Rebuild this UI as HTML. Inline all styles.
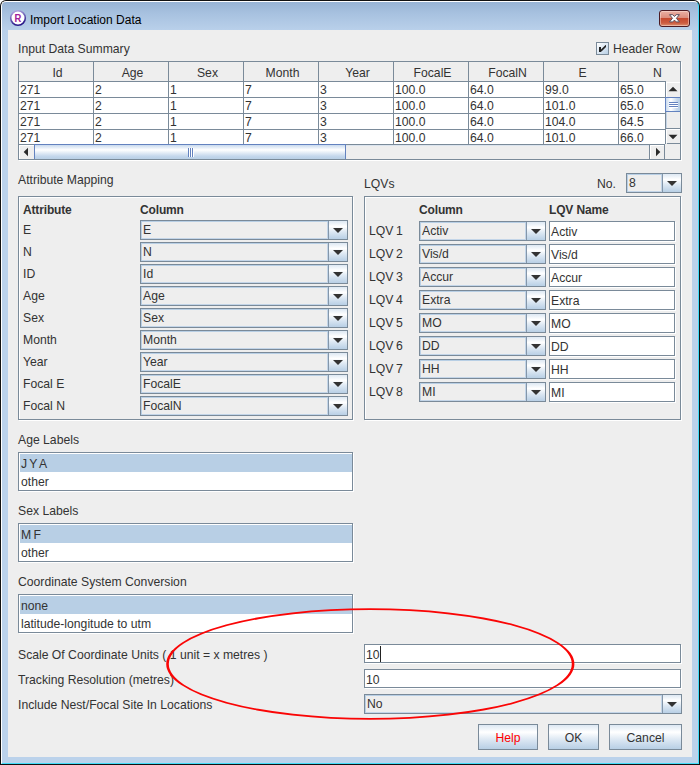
<!DOCTYPE html><html><head><meta charset="utf-8"><title>Import Location Data</title><style>
html,body{margin:0;padding:0;}
body{width:700px;height:765px;overflow:hidden;position:relative;background:#fff;font-family:"Liberation Sans",Arial,sans-serif;font-size:12.2px;color:#333;}
.abs{position:absolute;}
#frame{position:absolute;left:0;top:0;width:700px;height:765px;background:#111;border-radius:6px 6px 0 0;}
#frame2{position:absolute;left:1px;top:1px;width:698px;height:763px;box-sizing:border-box;border-radius:5px 5px 0 0;border:1px solid #fff;border-right-color:#42dcf8;border-bottom-color:#42dcf8;background:linear-gradient(#98b4d5 0px,#a8c2e0 12px,#b9d0ea 28px,#bbd2eb 40px,#bbd2eb 100%);}
#content{position:absolute;left:8px;top:30px;width:684px;height:727px;background:#eeeeee;}
.t{position:absolute;white-space:nowrap;line-height:14px;height:14px;}
.b{font-weight:bold;font-size:12px;letter-spacing:-0.15px;}
.title{position:absolute;left:30px;top:13px;font-size:12px;line-height:15px;color:#000;white-space:nowrap;}
.close{position:absolute;left:659px;top:10px;width:31px;height:17px;border:1px solid #4c1a22;border-radius:3px;box-sizing:border-box;background:linear-gradient(#eab0a4 0%,#dc8c7c 47%,#c64a30 50%,#cc5c40 80%,#de9070 100%);box-shadow:inset 0 0 0 1px rgba(255,235,230,.45);}
.etched{position:absolute;box-sizing:border-box;border:1px solid #7a8a99;}
.etchedw{position:absolute;box-sizing:border-box;border:1px solid #fff;}
.combo{position:absolute;box-sizing:border-box;height:20px;border:1px solid #7a8a99;background:#eee;}
.combo .txa{position:absolute;left:0;top:0;right:19px;bottom:0;box-shadow:inset 1px 1px 0 #b8cfe5, inset -1px -1px 0 #c3d5e8;}
.combo .tx{position:absolute;left:2px;top:2px;line-height:14px;white-space:nowrap;}
.combo .ar{position:absolute;right:0;top:0;width:18px;height:18px;border-left:1px solid #8496a9;background:linear-gradient(#dde8f3 0%,#fff 30%,#dde8f3 60%,#b8cfe5 100%);}
.combo .ar:after{content:"";position:absolute;left:4px;top:7px;border-left:5px solid transparent;border-right:5px solid transparent;border-top:5px solid #333;}
.tf{position:absolute;box-sizing:border-box;height:20px;border:1px solid #7a8a99;background:#fff;box-shadow:1px 1px 0 #fff;}
.tf .tx{position:absolute;left:1px;top:3px;line-height:14px;white-space:nowrap;}
.list{position:absolute;box-sizing:border-box;border:1px solid #7a8a99;background:#fff;box-shadow:1px 1px 0 #fff;}
.list .sel{position:absolute;left:1px;right:0;top:1px;height:18px;background:#b8cfe5;}
.list .r{position:absolute;left:2px;line-height:14px;white-space:nowrap;}
.btn{position:absolute;box-sizing:border-box;height:26px;border:1px solid #7a8a99;background:linear-gradient(#dde8f3 0%,#fff 30%,#dde8f3 60%,#b8cfe5 100%);text-align:center;line-height:26px;font-size:12.2px;}
</style></head><body>
<div id="frame"></div><div id="frame2"></div>
<svg class="abs" style="left:9px;top:9px" width="18" height="18" viewBox="0 0 18 18"><defs><linearGradient id="rg" x1="0" y1="0" x2="0.3" y2="1"><stop offset="0" stop-color="#b9b2e6"/><stop offset="1" stop-color="#2a1a8a"/></linearGradient></defs><circle cx="9" cy="9" r="7.3" fill="#fff" stroke="url(#rg)" stroke-width="1.6"/><text x="9" y="13" text-anchor="middle" transform="translate(9 0) scale(0.86 1) translate(-9 0)" font-family="Liberation Sans,sans-serif" font-weight="bold" font-size="11" fill="#a0209a">R</text></svg>
<div class="title">Import Location Data</div>
<div class="close"><svg width="29" height="15" viewBox="0 0 29 15" style="position:absolute;left:0;top:0"><path d="M9.5 3.7 L12.7 3.7 L14.45 5.5 L16.2 3.7 L19.4 3.7 L16.4 7.3 L19.4 10.9 L16.2 10.9 L14.45 9.1 L12.7 10.9 L9.5 10.9 L12.5 7.3 Z" fill="#fff" stroke="#584e5e" stroke-width="1" stroke-linejoin="round"/></svg></div>
<div id="content"></div>
<div class="t " style="left:18px;top:42px;">Input Data Summary</div>
<div class="abs" style="left:596px;top:42px;width:13px;height:13px;box-sizing:border-box;border:1px solid #7a8a99;background:linear-gradient(135deg,#fff 0%,#dde8f3 50%,#b8cfe5 100%);"></div>
<svg class="abs" style="left:596px;top:42px" width="13" height="13" viewBox="0 0 13 13"><rect x="3" y="5" width="2" height="5" fill="#222"/><path d="M5 7.6 L9.6 3 L10 3 L10 5 L5.5 9.5 L5 9.5 Z" fill="#222"/></svg>
<div class="t " style="left:613px;top:42px;">Header Row</div>
<div class="abs" style="left:18px;top:61px;width:663px;height:99px;box-sizing:border-box;border:1px solid #7a8a99;background:#eee;box-shadow:1px 1px 0 #fff;"></div>
<div class="abs" style="left:19px;top:82px;width:646px;height:62px;background:#fff;"></div>
<div class="abs" style="left:19px;top:81px;width:647px;height:1px;background:#7a8a99;"></div>
<div class="t" style="left:20px;top:66px;width:75px;text-align:center;line-height:15px;height:15px;">Id</div>
<div class="abs" style="left:93px;top:62px;width:1px;height:82px;background:#7a8a99;"></div>
<div class="t" style="left:95px;top:66px;width:75px;text-align:center;line-height:15px;height:15px;">Age</div>
<div class="abs" style="left:168px;top:62px;width:1px;height:82px;background:#7a8a99;"></div>
<div class="t" style="left:170px;top:66px;width:75px;text-align:center;line-height:15px;height:15px;">Sex</div>
<div class="abs" style="left:243px;top:62px;width:1px;height:82px;background:#7a8a99;"></div>
<div class="t" style="left:245px;top:66px;width:75px;text-align:center;line-height:15px;height:15px;">Month</div>
<div class="abs" style="left:318px;top:62px;width:1px;height:82px;background:#7a8a99;"></div>
<div class="t" style="left:320px;top:66px;width:75px;text-align:center;line-height:15px;height:15px;">Year</div>
<div class="abs" style="left:393px;top:62px;width:1px;height:82px;background:#7a8a99;"></div>
<div class="t" style="left:395px;top:66px;width:75px;text-align:center;line-height:15px;height:15px;">FocalE</div>
<div class="abs" style="left:468px;top:62px;width:1px;height:82px;background:#7a8a99;"></div>
<div class="t" style="left:470px;top:66px;width:75px;text-align:center;line-height:15px;height:15px;">FocalN</div>
<div class="abs" style="left:543px;top:62px;width:1px;height:82px;background:#7a8a99;"></div>
<div class="t" style="left:545px;top:66px;width:75px;text-align:center;line-height:15px;height:15px;">E</div>
<div class="abs" style="left:618px;top:62px;width:1px;height:82px;background:#7a8a99;"></div>
<div class="t" style="left:620px;top:66px;width:75px;text-align:center;line-height:15px;height:15px;">N</div>
<div class="abs" style="left:19px;top:97px;width:646px;height:1px;background:#7a8a99;"></div>
<div class="t" style="left:20px;top:83px;line-height:15px;height:15px;">271</div>
<div class="t" style="left:95px;top:83px;line-height:15px;height:15px;">2</div>
<div class="t" style="left:170px;top:83px;line-height:15px;height:15px;">1</div>
<div class="t" style="left:245px;top:83px;line-height:15px;height:15px;">7</div>
<div class="t" style="left:320px;top:83px;line-height:15px;height:15px;">3</div>
<div class="t" style="left:395px;top:83px;line-height:15px;height:15px;">100.0</div>
<div class="t" style="left:470px;top:83px;line-height:15px;height:15px;">64.0</div>
<div class="t" style="left:545px;top:83px;line-height:15px;height:15px;">99.0</div>
<div class="t" style="left:620px;top:83px;line-height:15px;height:15px;">65.0</div>
<div class="abs" style="left:19px;top:113px;width:646px;height:1px;background:#7a8a99;"></div>
<div class="t" style="left:20px;top:99px;line-height:15px;height:15px;">271</div>
<div class="t" style="left:95px;top:99px;line-height:15px;height:15px;">2</div>
<div class="t" style="left:170px;top:99px;line-height:15px;height:15px;">1</div>
<div class="t" style="left:245px;top:99px;line-height:15px;height:15px;">7</div>
<div class="t" style="left:320px;top:99px;line-height:15px;height:15px;">3</div>
<div class="t" style="left:395px;top:99px;line-height:15px;height:15px;">100.0</div>
<div class="t" style="left:470px;top:99px;line-height:15px;height:15px;">64.0</div>
<div class="t" style="left:545px;top:99px;line-height:15px;height:15px;">101.0</div>
<div class="t" style="left:620px;top:99px;line-height:15px;height:15px;">65.0</div>
<div class="abs" style="left:19px;top:129px;width:646px;height:1px;background:#7a8a99;"></div>
<div class="t" style="left:20px;top:115px;line-height:15px;height:15px;">271</div>
<div class="t" style="left:95px;top:115px;line-height:15px;height:15px;">2</div>
<div class="t" style="left:170px;top:115px;line-height:15px;height:15px;">1</div>
<div class="t" style="left:245px;top:115px;line-height:15px;height:15px;">7</div>
<div class="t" style="left:320px;top:115px;line-height:15px;height:15px;">3</div>
<div class="t" style="left:395px;top:115px;line-height:15px;height:15px;">100.0</div>
<div class="t" style="left:470px;top:115px;line-height:15px;height:15px;">64.0</div>
<div class="t" style="left:545px;top:115px;line-height:15px;height:15px;">104.0</div>
<div class="t" style="left:620px;top:115px;line-height:15px;height:15px;">64.5</div>
<div class="t" style="left:20px;top:131px;line-height:15px;height:15px;">271</div>
<div class="t" style="left:95px;top:131px;line-height:15px;height:15px;">2</div>
<div class="t" style="left:170px;top:131px;line-height:15px;height:15px;">1</div>
<div class="t" style="left:245px;top:131px;line-height:15px;height:15px;">7</div>
<div class="t" style="left:320px;top:131px;line-height:15px;height:15px;">3</div>
<div class="t" style="left:395px;top:131px;line-height:15px;height:15px;">100.0</div>
<div class="t" style="left:470px;top:131px;line-height:15px;height:15px;">64.0</div>
<div class="t" style="left:545px;top:131px;line-height:15px;height:15px;">101.0</div>
<div class="t" style="left:620px;top:131px;line-height:15px;height:15px;">66.0</div>
<div class="abs" style="left:666px;top:62px;width:14px;height:97px;background:#eee;"></div>
<div class="abs" style="left:665px;top:82px;width:1px;height:62px;background:#7a8a99;"></div>
<div class="abs" style="left:666px;top:82px;width:14px;height:15px;box-shadow:inset 1px 1px 0 #fff;"></div>
<div class="abs" style="left:666px;top:129px;width:14px;height:14px;box-shadow:inset 1px 1px 0 #fff;"></div>
<div class="abs" style="left:666px;top:112px;width:1px;height:16px;background:#c4d4e6;"></div>
<svg class="abs" style="left:666px;top:82px" width="14" height="63" viewBox="0 0 14 63"><path d="M2.5 9.3 L11.5 9.3 L7 4.8 Z" fill="#2a2a2a"/><path d="M2.5 52.7 L11.5 52.7 L7 57.2 Z" fill="#2a2a2a"/></svg>
<div class="abs" style="left:665px;top:97px;width:15px;height:15px;box-sizing:border-box;border:1px solid #6382bf;border-right:0;background:linear-gradient(90deg,#c9daee 0%,#fff 35%,#c4d7ec 80%,#b8cfe5 100%);"></div>
<div class="abs" style="left:669px;top:102px;width:9px;height:1px;background:#6382bf;box-shadow:0 2px 0 #6382bf,0 4px 0 #6382bf,0 1px 0 #fff,0 3px 0 #fff,0 5px 0 #fff;"></div>
<div class="abs" style="left:666px;top:128px;width:14px;height:1px;background:#7a8a99;"></div>
<div class="abs" style="left:667px;top:143px;width:13px;height:1px;background:#7a8a99;"></div>
<div class="abs" style="left:19px;top:145px;width:646px;height:14px;background:#eee;"></div>
<div class="abs" style="left:19px;top:144px;width:646px;height:1px;background:#7a8a99;"></div>
<div class="abs" style="left:19px;top:145px;width:15px;height:14px;box-shadow:inset 1px 1px 0 #fff;"></div>
<div class="abs" style="left:650px;top:145px;width:14px;height:14px;box-shadow:inset 1px 1px 0 #fff;"></div>
<div class="abs" style="left:346px;top:145px;width:303px;height:1px;background:#dbe4ee;"></div>
<div class="abs" style="left:34px;top:144px;width:312px;height:15px;box-sizing:border-box;border:1px solid #6382bf;border-bottom:0;background:linear-gradient(#c9daee 0%,#fff 35%,#c4d7ec 80%,#b8cfe5 100%);"></div>
<div class="abs" style="left:188px;top:148px;width:1px;height:9px;background:#6382bf;box-shadow:2px 0 0 #6382bf,4px 0 0 #6382bf,1px 0 0 #fff,3px 0 0 #fff,5px 0 0 #fff;"></div>
<svg class="abs" style="left:19px;top:145px" width="647" height="15" viewBox="0 0 647 15"><path d="M9 2.7 L9 11.3 L4.7 7 Z" fill="#2a2a2a"/><path d="M637 2.7 L637 11.3 L641.3 7 Z" fill="#2a2a2a"/></svg>
<div class="abs" style="left:649px;top:145px;width:1px;height:14px;background:#7a8a99;"></div>
<div class="abs" style="left:664px;top:145px;width:1px;height:14px;background:#7a8a99;"></div>
<div class="t " style="left:18px;top:173px;">Attribute Mapping</div>
<div class="etchedw" style="left:19px;top:197px;width:335px;height:224px;"></div>
<div class="etched" style="left:18px;top:196px;width:335px;height:224px;"></div>
<div class="t b" style="left:23px;top:203px;">Attribute</div>
<div class="t b" style="left:140px;top:203px;">Column</div>
<div class="t " style="left:23px;top:223px;">E</div>
<div class="combo" style="left:140px;top:220px;width:208px;"><div class="txa"></div><div class="tx">E</div><div class="ar"></div></div>
<div class="t " style="left:23px;top:245px;">N</div>
<div class="combo" style="left:140px;top:242px;width:208px;"><div class="txa"></div><div class="tx">N</div><div class="ar"></div></div>
<div class="t " style="left:23px;top:267px;">ID</div>
<div class="combo" style="left:140px;top:264px;width:208px;"><div class="txa"></div><div class="tx">Id</div><div class="ar"></div></div>
<div class="t " style="left:23px;top:289px;">Age</div>
<div class="combo" style="left:140px;top:286px;width:208px;"><div class="txa"></div><div class="tx">Age</div><div class="ar"></div></div>
<div class="t " style="left:23px;top:311px;">Sex</div>
<div class="combo" style="left:140px;top:308px;width:208px;"><div class="txa"></div><div class="tx">Sex</div><div class="ar"></div></div>
<div class="t " style="left:23px;top:333px;">Month</div>
<div class="combo" style="left:140px;top:330px;width:208px;"><div class="txa"></div><div class="tx">Month</div><div class="ar"></div></div>
<div class="t " style="left:23px;top:355px;">Year</div>
<div class="combo" style="left:140px;top:352px;width:208px;"><div class="txa"></div><div class="tx">Year</div><div class="ar"></div></div>
<div class="t " style="left:23px;top:377px;">Focal E</div>
<div class="combo" style="left:140px;top:374px;width:208px;"><div class="txa"></div><div class="tx">FocalE</div><div class="ar"></div></div>
<div class="t " style="left:23px;top:399px;">Focal N</div>
<div class="combo" style="left:140px;top:396px;width:208px;"><div class="txa"></div><div class="tx">FocalN</div><div class="ar"></div></div>
<div class="t " style="left:364px;top:177px;">LQVs</div>
<div class="t " style="left:597px;top:177px;">No.</div>
<div class="combo" style="left:626px;top:173px;width:56px;"><div class="txa"></div><div class="tx">8</div><div class="ar"></div></div>
<div class="etchedw" style="left:365px;top:197px;width:317px;height:224px;"></div>
<div class="etched" style="left:364px;top:196px;width:317px;height:224px;"></div>
<div class="t b" style="left:419px;top:203px;">Column</div>
<div class="t b" style="left:549px;top:203px;">LQV Name</div>
<div class="t " style="left:369px;top:224px;word-spacing:-0.7px;">LQV 1</div>
<div class="combo" style="left:419px;top:221px;width:127px;"><div class="txa"></div><div class="tx">Activ</div><div class="ar"></div></div>
<div class="tf" style="left:549px;top:221px;width:126px;"><div class="tx">Activ</div></div>
<div class="t " style="left:369px;top:247px;word-spacing:-0.7px;">LQV 2</div>
<div class="combo" style="left:419px;top:244px;width:127px;"><div class="txa"></div><div class="tx">Vis/d</div><div class="ar"></div></div>
<div class="tf" style="left:549px;top:244px;width:126px;"><div class="tx">Vis/d</div></div>
<div class="t " style="left:369px;top:270px;word-spacing:-0.7px;">LQV 3</div>
<div class="combo" style="left:419px;top:267px;width:127px;"><div class="txa"></div><div class="tx">Accur</div><div class="ar"></div></div>
<div class="tf" style="left:549px;top:267px;width:126px;"><div class="tx">Accur</div></div>
<div class="t " style="left:369px;top:293px;word-spacing:-0.7px;">LQV 4</div>
<div class="combo" style="left:419px;top:290px;width:127px;"><div class="txa"></div><div class="tx">Extra</div><div class="ar"></div></div>
<div class="tf" style="left:549px;top:290px;width:126px;"><div class="tx">Extra</div></div>
<div class="t " style="left:369px;top:316px;word-spacing:-0.7px;">LQV 5</div>
<div class="combo" style="left:419px;top:313px;width:127px;"><div class="txa"></div><div class="tx">MO</div><div class="ar"></div></div>
<div class="tf" style="left:549px;top:313px;width:126px;"><div class="tx">MO</div></div>
<div class="t " style="left:369px;top:339px;word-spacing:-0.7px;">LQV 6</div>
<div class="combo" style="left:419px;top:336px;width:127px;"><div class="txa"></div><div class="tx">DD</div><div class="ar"></div></div>
<div class="tf" style="left:549px;top:336px;width:126px;"><div class="tx">DD</div></div>
<div class="t " style="left:369px;top:362px;word-spacing:-0.7px;">LQV 7</div>
<div class="combo" style="left:419px;top:359px;width:127px;"><div class="txa"></div><div class="tx">HH</div><div class="ar"></div></div>
<div class="tf" style="left:549px;top:359px;width:126px;"><div class="tx">HH</div></div>
<div class="t " style="left:369px;top:385px;word-spacing:-0.7px;">LQV 8</div>
<div class="combo" style="left:419px;top:382px;width:127px;"><div class="txa"></div><div class="tx">MI</div><div class="ar"></div></div>
<div class="tf" style="left:549px;top:382px;width:126px;"><div class="tx">MI</div></div>
<div class="t " style="left:18px;top:433px;">Age Labels</div>
<div class="list" style="left:18px;top:452px;width:335px;height:39px;"><div class="sel"></div><div class="r" style="top:4px;word-spacing:-1px">J Y A</div><div class="r" style="top:22px">other</div></div>
<div class="t " style="left:18px;top:504px;">Sex Labels</div>
<div class="list" style="left:18px;top:523px;width:335px;height:39px;"><div class="sel"></div><div class="r" style="top:4px;word-spacing:-1px">M F</div><div class="r" style="top:22px">other</div></div>
<div class="t " style="left:18px;top:575px;">Coordinate System Conversion</div>
<div class="list" style="left:18px;top:594px;width:335px;height:39px;"><div class="sel"></div><div class="r" style="top:4px;word-spacing:-1px">none</div><div class="r" style="top:22px">latitude-longitude to utm</div></div>
<div class="t " style="left:18px;top:648px;">Scale Of Coordinate Units ( 1 unit = x metres )</div>
<div class="t " style="left:18px;top:673px;">Tracking Resolution (metres)</div>
<div class="t " style="left:18px;top:698px;">Include Nest/Focal Site In Locations</div>
<div class="tf" style="left:364px;top:644px;width:317px;height:19px;"><div class="tx">10</div><div class="abs" style="left:15px;top:1px;width:1px;height:16px;background:#222"></div></div>
<div class="tf" style="left:364px;top:669px;width:317px;height:19px;"><div class="tx">10</div></div>
<div class="combo" style="left:364px;top:694px;width:318px;"><div class="txa"></div><div class="tx">No</div><div class="ar"></div></div>
<div class="btn" style="left:478px;top:724px;width:60px;color:#f00;">Help</div>
<div class="btn" style="left:548px;top:724px;width:51px;">OK</div>
<div class="btn" style="left:609px;top:724px;width:73px;">Cancel</div>
<svg class="abs" style="left:0;top:0" width="700" height="765" viewBox="0 0 700 765"><path fill="#fa0505" fill-rule="evenodd" d="M166.20000000000002 664 A204.1 55.8 0 1 0 574.4 664 A204.1 55.8 0 1 0 166.20000000000002 664 Z M168.8 664 A201.5 53.95 0 1 0 571.8 664 A201.5 53.95 0 1 0 168.8 664 Z"/></svg>
</body></html>
